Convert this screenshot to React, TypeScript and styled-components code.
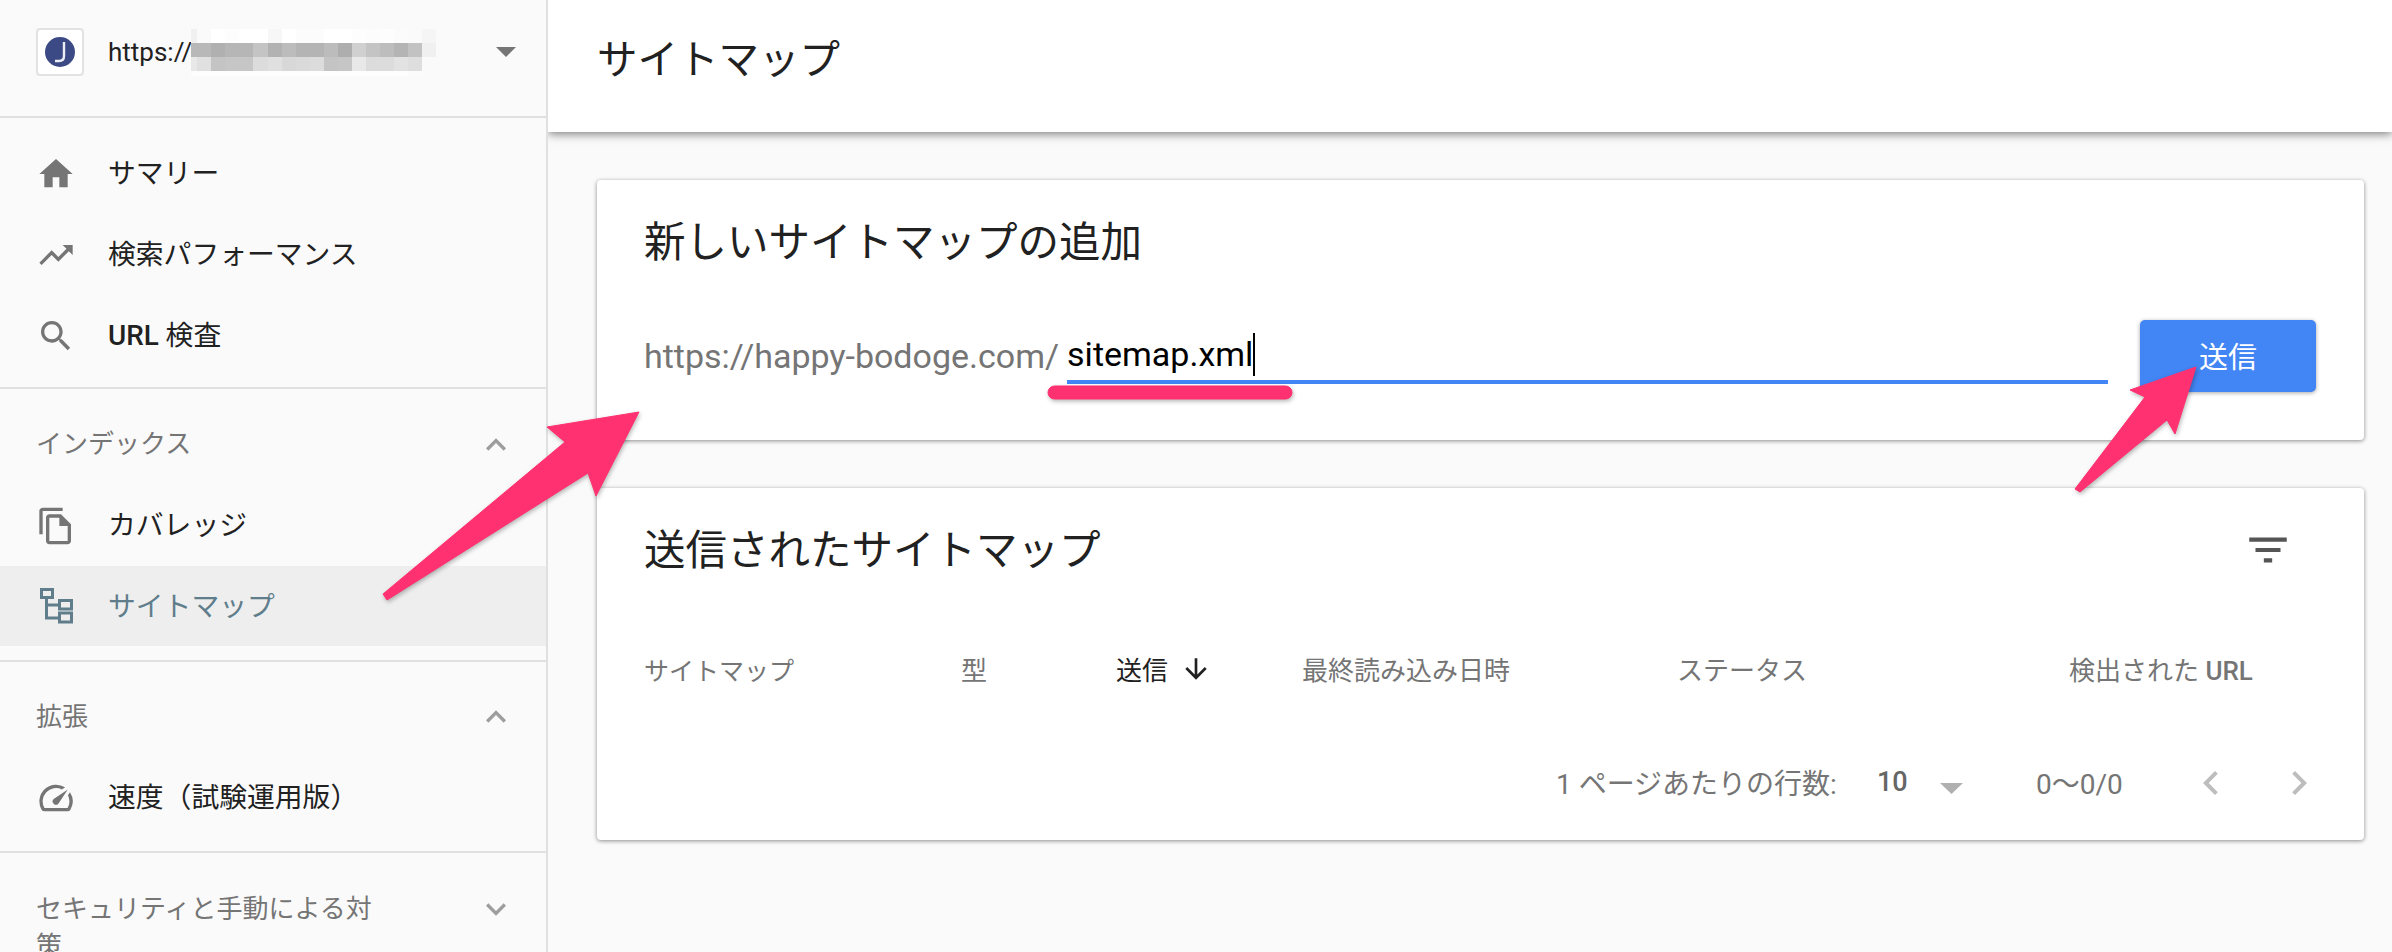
import React from "react";
import styled, { createGlobalStyle } from "styled-components";

const FONT = `Roboto, "Noto Sans CJK JP", sans-serif`;

const Global = createGlobalStyle`
  html, body { margin: 0; padding: 0; background: #fafafa; }
  body { font-family: ${FONT}; color: #212121; }
  * { box-sizing: border-box; }
`;

const Page = styled.div`
  position: relative;
  display: flex;
  width: 2392px;
  height: 952px;
  overflow: hidden;
  background: #fafafa;
`;

const Sidebar = styled.aside`
  flex: 0 0 548px;
  height: 952px;
  overflow: hidden;
  border-right: 2px solid #e0e0e0;
  background: #fafafa;
`;

const SiteRow = styled.div`
  display: flex;
  align-items: center;
  height: 118px;
  padding: 0 30px 12px 36px;
  border-bottom: 2px solid #e0e0e0;
`;

const Favicon = styled.div`
  flex: 0 0 48px;
  height: 48px;
  display: flex;
  align-items: center;
  justify-content: center;
  background: #fff;
  border: 2px solid #e2e2e2;
  border-radius: 4px;
`;

const SiteUrl = styled.span`
  width: 83px;
  margin-left: 24px;
  font-size: 26px;
  white-space: nowrap;
  color: #212121;
`;

const Mosaic = styled.svg`
  display: block;
  flex: 0 0 auto;
`;

const Spacer = styled.div`
  flex: 1;
`;

const NavGroup = styled.section<{ $top: number; $bottom: number; $last?: boolean }>`
  padding: ${(p) => p.$top}px 0 ${(p) => p.$bottom}px;
  border-bottom: ${(p) => (p.$last ? "none" : "2px solid #e0e0e0")};
`;

const NavRow = styled.div<{ $active?: boolean; $h?: number }>`
  display: flex;
  align-items: center;
  height: ${(p) => p.$h ?? 81}px;
  padding-left: 36px;
  gap: 32px;
  font-size: 27.8px;
  color: ${(p) => (p.$active ? "#607d8b" : "#212121")};
  background: ${(p) => (p.$active ? "#eeeeee" : "transparent")};
`;

const NavLabel = styled.span`
  margin-bottom: 5px;
`;

const Strong = styled.span`
  font-weight: 500;
`;

const SectionHead = styled.div<{ $h?: number }>`
  display: flex;
  align-items: center;
  justify-content: space-between;
  height: ${(p) => p.$h ?? 81}px;
  padding: 0 30px 0 36px;
  font-size: 26px;
  color: #757575;
`;

const SectionLabel = styled.span`
  margin-bottom: 6px;
`;

const WrapHead = styled.div`
  display: flex;
  align-items: flex-start;
  justify-content: space-between;
  padding: 0 30px 0 36px;
  font-size: 26px;
  line-height: 37px;
  color: #757575;
`;

const WrapText = styled.span`
  width: 345px;
  margin-top: 2px;
`;

const Icon = styled.svg<{ $size: number; $color: string }>`
  display: block;
  flex: 0 0 auto;
  width: ${(p) => p.$size}px;
  height: ${(p) => p.$size}px;
  fill: ${(p) => p.$color};
`;

const Main = styled.main`
  flex: 1;
  min-width: 0;
  overflow: hidden;
  background: #fafafa;
`;

const TopBar = styled.header`
  position: relative;
  height: 132px;
  display: flex;
  align-items: center;
  padding: 0 0 20px 49px;
  background: #fff;
  font-size: 40.5px;
  color: #212121;
  box-shadow: 0 2px 9px rgba(0, 0, 0, 0.5);
`;

const Cards = styled.div`
  display: flex;
  flex-direction: column;
  gap: 48px;
  padding: 48px 28px 0 49px;
`;

const Card = styled.div`
  background: #fff;
  border-radius: 4px;
  box-shadow: 0 1px 4px rgba(0, 0, 0, 0.45);
`;

const CardTitle = styled.div`
  height: 60px;
  display: flex;
  align-items: center;
  padding-bottom: 6px;
  font-size: 41.5px;
  color: #212121;
`;

const AddCard = styled(Card)`
  height: 260px;
  padding: 32px 48px 48px 47px;
`;

const FormRow = styled.div`
  display: flex;
  align-items: stretch;
  height: 72px;
  margin-top: 48px;
`;

const Prefix = styled.span`
  align-self: center;
  font-size: 34px;
  color: #757575;
`;

const InputBox = styled.div`
  flex: 1;
  height: 64px;
  margin-left: 8px;
  padding-top: 8px;
  display: flex;
  align-items: center;
  border-bottom: 4px solid #4285f4;
  font-size: 34px;
  color: #000;
`;

const Caret = styled.i`
  display: block;
  width: 2px;
  height: 43px;
  background: #000;
`;

const SendButton = styled.button`
  flex: 0 0 176px;
  margin-left: 32px;
  padding: 0 0 2px;
  border: 0;
  border-radius: 5px;
  background: #4285f4;
  color: #fff;
  font-family: ${FONT};
  font-size: 29px;
  box-shadow: 0 1px 4px rgba(0, 0, 0, 0.35);
`;

const ListCard = styled(Card)`
  padding: 32px 0 21px 47px;
`;

const ListHead = styled.div`
  display: flex;
  align-items: center;
  justify-content: space-between;
  padding-right: 71px;
`;

const TableHead = styled.div`
  display: grid;
  grid-template-columns: 317px 155px 186px 375px 392px 190px;
  align-items: center;
  height: 70px;
  margin-top: 55px;
  padding-bottom: 3px;
  font-size: 26px;
  color: #757575;
`;

const FirstHead = styled.span`
  font-size: 25px;
`;

const SortCell = styled.div`
  display: flex;
  align-items: center;
  gap: 12px;
  color: #212121;
`;

const Pager = styled.div`
  display: flex;
  align-items: center;
  height: 72px;
  margin-top: 42px;
  padding-left: 912px;
  font-size: 28px;
  color: #757575;
`;

const PerPage = styled.span`
  width: 321px;
  margin-bottom: 2px;
`;

const PerPageValue = styled.span`
  width: 63px;
  margin-bottom: 2px;
  font-size: 27px;
  font-weight: 500;
  color: #666666;
`;

const PagerRange = styled.span`
  width: 151px;
  margin-bottom: 2px;
`;

const DropWrap = styled.span<{ $w: number }>`
  width: ${(p) => p.$w}px;
  display: flex;
  padding-top: 10px;
`;

const PagerButtons = styled.div`
  display: flex;
  gap: 40px;
`;

const Annotations = styled.svg`
  position: absolute;
  inset: 0;
  width: 2392px;
  height: 952px;
  pointer-events: none;
  filter: drop-shadow(1px 2px 2px rgba(0, 0, 0, 0.28));
`;

const P = {
  home: "M10 20v-6h4v6h5v-8h3L12 3 2 12h3v8z",
  trend: "M16 6l2.29 2.29-4.88 4.88-4-4L2 16.59 3.41 18l6-6 4 4 6.3-6.29L22 12V6z",
  search:
    "M15.5 14h-.79l-.28-.27C15.41 12.59 16 11.11 16 9.5 16 5.91 13.09 3 9.5 3S3 5.91 3 9.5 5.91 16 9.5 16c1.61 0 3.09-.59 4.23-1.57l.27.28v.79l5 4.99L20.49 19l-4.99-5zm-6 0C7.01 14 5 11.99 5 9.5S7.01 5 9.5 5 14 7.01 14 9.5 11.99 14 9.5 14z",
  copy: "M16 1H4c-1.1 0-2 .9-2 2v14h2V3h12V1zm-1 4H8c-1.1 0-1.99.9-1.99 2L6 21c0 1.1.89 2 1.99 2H19c1.1 0 2-.9 2-2V11l-6-6zM8 21V7h6v5h5v9H8z",
  speed:
    "M20.38 8.57l-1.23 1.85a8 8 0 0 1-.22 7.58H5.07A8 8 0 0 1 15.58 6.85l1.85-1.23A10 10 0 0 0 3.35 19a2 2 0 0 0 1.72 1h13.85a2 2 0 0 0 1.74-1 10 10 0 0 0-.27-10.44zM10.59 15.41a2 2 0 0 0 2.83 0l5.66-8.49-8.49 5.66a2 2 0 0 0 0 2.83z",
  up: "M12 8l-6 6 1.41 1.41L12 10.83l4.59 4.58L18 14z",
  down: "M16.59 8.59L12 13.17 7.41 8.59 6 10l6 6 6-6z",
  filter: "M10 18h4v-2h-4v2zM3 6v2h18V6H3zm3 7h12v-2H6v2z",
  arrow: "M20 12l-1.41-1.41L13 16.17V4h-2v12.17l-5.58-5.6L4 12l8 8 8-8z",
  left: "M15.41 7.41L14 6l-6 6 6 6 1.41-1.41L10.83 12z",
  right: "M10 6L8.59 7.41 13.17 12l-4.58 4.58L10 18l6-6z",
};

const Glyph = ({ d, size = 40, color = "#757575" }: { d: string; size?: number; color?: string }) => (
  <Icon viewBox="0 0 24 24" $size={size} $color={color}>
    <path d={d} />
  </Icon>
);

const Triangle = ({ w, h, color }: { w: number; h: number; color: string }) => (
  <svg width={w} height={h} viewBox={`0 0 ${w} ${h}`} style={{ display: "block" }}>
    <polygon points={`0,0 ${w},0 ${w / 2},${h}`} fill={color} />
  </svg>
);

const SitemapIcon = () => (
  <svg width="40" height="40" viewBox="0 0 40 40" style={{ display: "block", flex: "0 0 auto" }}>
    <g fill="none" stroke="#607d8b" strokeWidth="3">
      <rect x="5.5" y="3.5" width="11" height="8" />
      <rect x="23.5" y="14.5" width="12" height="8.5" />
      <rect x="23.5" y="27" width="12" height="9" />
      <path d="M10.5 11v21h13M10.5 19h13" />
    </g>
  </svg>
);

const FaviconMark = () => (
  <svg width="32" height="32" viewBox="0 0 32 32" style={{ display: "block" }}>
    <circle cx="16" cy="16" r="15" fill="#3b4a84" />
    <path d="M20 6v14c0 3-2 5-5 5h-4" fill="none" stroke="#eceef6" strokeWidth="2.4" />
  </svg>
);

const MOSAIC_X = [0, 6, 20, 34, 48, 62, 77, 91, 105, 119, 133, 147, 161, 175, 189, 203, 217, 231, 245];
const MOSAIC_Y = [0, 14, 28, 42, 47];
const MOSAIC: string[][] = [
  ["f0", "fa", "ff", "fd", "ff", "ff", "f7", "ff", "fc", "fc", "ff", "ff", "fd", "fc", "fd", "fb", "fa", "f5"],
  ["b8", "b8", "b0", "b6", "b6", "c4", "b2", "bc", "b4", "b4", "bc", "ae", "d0", "c4", "bd", "b4", "c2", "f0"],
  ["e8", "e0", "c4", "c6", "c6", "dc", "e0", "d8", "da", "dc", "c4", "c6", "e8", "dc", "dc", "e2", "de", "fa"],
  ["fd", "fd", "fd", "fd", "fd", "fd", "fd", "fd", "fd", "fd", "fd", "fd", "fd", "fd", "fd", "fd", "fb", "fa"],
];

const BlurredHost = () => (
  <Mosaic width="245" height="47" viewBox="0 0 245 47" shapeRendering="crispEdges">
    {MOSAIC.map((row, r) =>
      row.map((c, i) => (
        <rect
          key={`${r}-${i}`}
          x={MOSAIC_X[i]}
          y={MOSAIC_Y[r]}
          width={MOSAIC_X[i + 1] - MOSAIC_X[i]}
          height={MOSAIC_Y[r + 1] - MOSAIC_Y[r]}
          fill={`#${c}${c}${c}`}
        />
      ))
    )}
  </Mosaic>
);

export default function App() {
  return (
    <Page>
      <Global />
      <Sidebar>
        <SiteRow>
          <Favicon>
            <FaviconMark />
          </Favicon>
          <SiteUrl>https://</SiteUrl>
          <BlurredHost />
          <Spacer />
          <Triangle w={20} h={10} color="#757575" />
        </SiteRow>

        <NavGroup $top={15} $bottom={11}>
          <NavRow>
            <Glyph d={P.home} />
            <NavLabel>サマリー</NavLabel>
          </NavRow>
          <NavRow>
            <Glyph d={P.trend} />
            <NavLabel>検索パフォーマンス</NavLabel>
          </NavRow>
          <NavRow>
            <Glyph d={P.search} />
            <NavLabel>
              <Strong>URL</Strong> 検査
            </NavLabel>
          </NavRow>
        </NavGroup>

        <NavGroup $top={15} $bottom={14}>
          <SectionHead>
            <SectionLabel>インデックス</SectionLabel>
            <Glyph d={P.up} color="#9e9e9e" />
          </SectionHead>
          <NavRow>
            <Glyph d={P.copy} />
            <NavLabel>カバレッジ</NavLabel>
          </NavRow>
          <NavRow $active $h={80}>
            <SitemapIcon />
            <NavLabel>サイトマップ</NavLabel>
          </NavRow>
        </NavGroup>

        <NavGroup $top={15} $bottom={13}>
          <SectionHead $h={80}>
            <SectionLabel>拡張</SectionLabel>
            <Glyph d={P.up} color="#9e9e9e" />
          </SectionHead>
          <NavRow>
            <Glyph d={P.speed} />
            <NavLabel>速度（試験運用版）</NavLabel>
          </NavRow>
        </NavGroup>

        <NavGroup $top={36} $bottom={0} $last>
          <WrapHead>
            <WrapText>セキュリティと手動による対策</WrapText>
            <Glyph d={P.down} color="#9e9e9e" />
          </WrapHead>
        </NavGroup>
      </Sidebar>

      <Main>
        <TopBar>サイトマップ</TopBar>
        <Cards>
          <AddCard>
            <CardTitle>新しいサイトマップの追加</CardTitle>
            <FormRow>
              <Prefix>https://happy-bodoge.com/</Prefix>
              <InputBox>
                sitemap.xml
                <Caret />
              </InputBox>
              <SendButton>送信</SendButton>
            </FormRow>
          </AddCard>

          <ListCard>
            <ListHead>
              <CardTitle>送信されたサイトマップ</CardTitle>
              <Glyph d={P.filter} size={50} color="#555555" />
            </ListHead>
            <TableHead>
              <FirstHead>サイトマップ</FirstHead>
              <span>型</span>
              <SortCell>
                送信
                <Glyph d={P.arrow} size={32} color="#212121" />
              </SortCell>
              <span>最終読み込み日時</span>
              <span>ステータス</span>
              <span>
                検出された <Strong>URL</Strong>
              </span>
            </TableHead>
            <Pager>
              <PerPage>1 ページあたりの行数:</PerPage>
              <PerPageValue>10</PerPageValue>
              <DropWrap $w={96}>
                <Triangle w={23} h={11} color="#b0b0b0" />
              </DropWrap>
              <PagerRange>0〜0/0</PagerRange>
              <PagerButtons>
                <Glyph d={P.left} size={48} color="#bdbdbd" />
                <Glyph d={P.right} size={48} color="#bdbdbd" />
              </PagerButtons>
            </Pager>
          </ListCard>
        </Cards>
      </Main>

      <Annotations viewBox="0 0 2392 952">
        <g fill="#ff3170" stroke="#ff3170" strokeLinejoin="round">
          <polygon strokeWidth="1" points="639,412 547,427 565,442 383,594 387,600 588,473 596,496" />
          <polygon strokeWidth="1" points="2196,367 2130,390 2145,397 2075,489 2080,492 2167,420 2175,434" />
          <rect x="1048" y="386" width="244" height="13" rx="6.5" strokeWidth="1" />
        </g>
      </Annotations>
    </Page>
  );
}
